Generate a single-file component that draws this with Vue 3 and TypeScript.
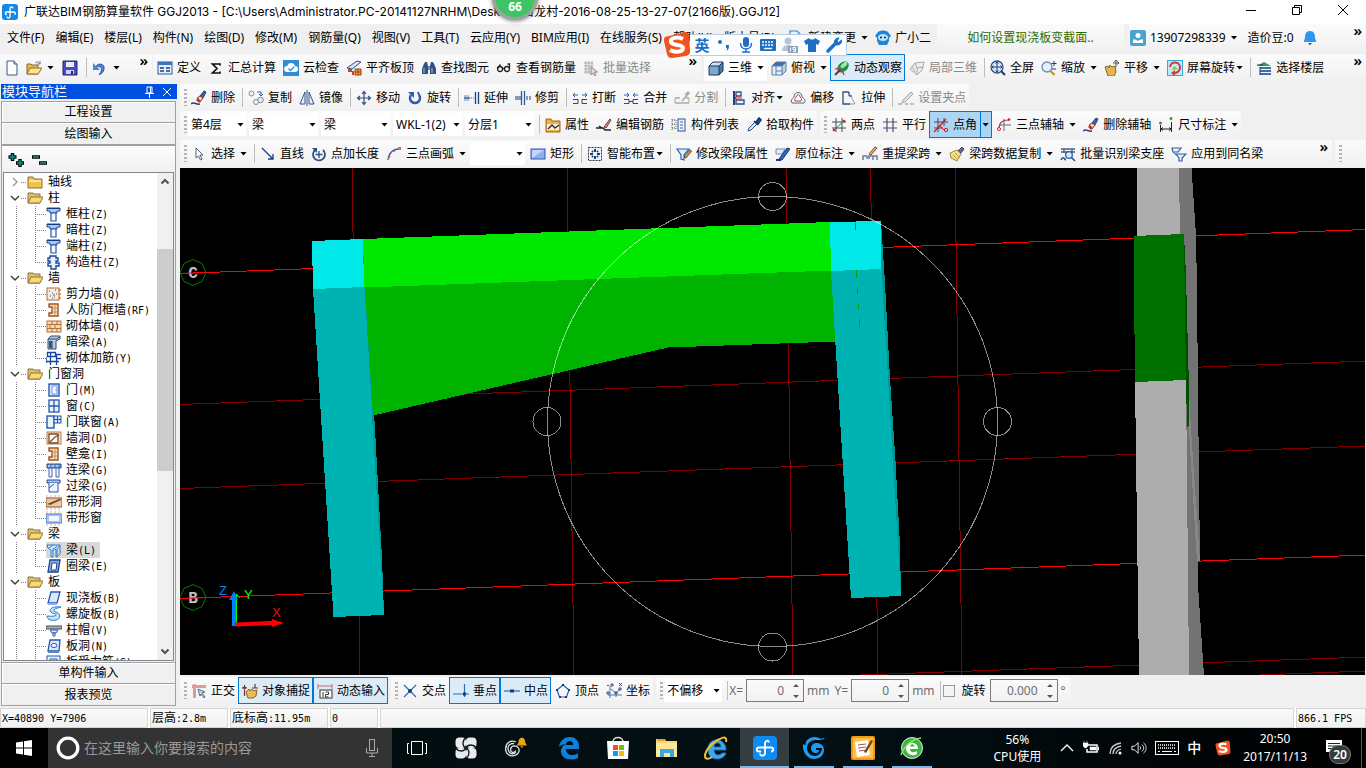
<script setup lang="ts">
import { ref } from 'vue'

interface Tool {
  icon?: string
  label?: string
  arrow?: '' | 'wide' | 'tight' | 'split'
  on?: boolean
  off?: boolean
  white?: boolean
  sep?: boolean
}
interface Leaf { icon: string; name: string; key: string }
interface Branch { name: string; open: boolean; items: Leaf[] }

const S = { sep: true } as Tool
const t = (icon: string, label: string, extra: Partial<Tool> = {}): Tool => ({ icon, label, ...extra })

const menus = ['文件(F)', '编辑(E)', '楼层(L)', '构件(N)', '绘图(D)', '修改(M)', '钢筋量(Q)', '视图(V)', '工具(T)', '云应用(Y)', 'BIM应用(I)', '在线服务(S)', '帮助(H)', '版本号(B)']

const mainTools: Tool[] = [
  t('define', '定义'), t('sigma', '汇总计算'), t('cloud', '云检查'), t('level', '平齐板顶'),
  t('find', '查找图元'), t('glasses', '查看钢筋量'), t('batch', '批量选择', { off: true }),
]
const viewTools: Tool[] = [
  t('cube', '三维', { arrow: 'wide', white: true }), t('cubetop', '俯视', { arrow: 'wide' }),
  t('orbit', '动态观察', { on: true }), t('partcube', '局部三维', { off: true }), S,
  t('full', '全屏'), t('zoom', '缩放', { arrow: 'wide' }), t('hand', '平移', { arrow: 'wide' }),
  t('screenrot', '屏幕旋转', { arrow: 'tight' }), S, t('floors', '选择楼层'),
]
const editTools: Tool[] = [
  t('erase', '删除'), S, t('copy', '复制'), t('mirror', '镜像'), S, t('move', '移动'), t('rotate', '旋转'), S,
  t('extend', '延伸'), t('trim', '修剪'), S, t('break', '打断'), t('merge', '合并'), t('split', '分割', { off: true }), S,
  t('align', '对齐', { arrow: 'tight' }), t('offset', '偏移'), t('stretch', '拉伸'), S, t('grippt', '设置夹点', { off: true }),
]
const compTools: Tool[] = [S, t('props', '属性'), t('editbar', '编辑钢筋'), t('list', '构件列表'), t('pick', '拾取构件')]
const axisTools: Tool[] = [
  t('twopt', '两点'), t('parallel', '平行'), t('ptangle', '点角', { on: true, arrow: 'split' }),
  t('threeaxis', '三点辅轴', { arrow: 'wide' }), t('erase', '删除辅轴'), t('dim', '尺寸标注', { arrow: 'wide' }),
]
const drawTools: Tool[] = [
  t('cursor', '选择', { arrow: 'wide' }), S, t('line', '直线'), t('ptlen', '点加长度'), t('arc', '三点画弧', { arrow: 'wide' }),
]
const beamTools: Tool[] = [
  t('rect', '矩形'), S, t('smart', '智能布置', { arrow: 'tight' }), S, t('beamedit', '修改梁段属性'),
  t('insitu', '原位标注', { arrow: 'wide' }), t('respan', '重提梁跨', { arrow: 'wide' }),
  t('brush', '梁跨数据复制', { arrow: 'wide' }), t('support', '批量识别梁支座'), t('apply', '应用到同名梁'),
]
const modeTools: Tool[] = [t('ortho', '正交'), t('snap', '对象捕捉', { on: true }), t('dyn', '动态输入', { on: true })]
const snapTools: Tool[] = [
  t('cross', '交点'), t('perp', '垂点', { on: true }), t('mid', '中点', { on: true }), t('vertex', '顶点'), t('coord', '坐标'),
]
const combos = [
  { id: 'floor', label: '楼层', value: '第4层', small: true },
  { id: 'kind', label: '构件类型', value: '梁', small: false },
  { id: 'sort', label: '构件种类', value: '梁', small: false },
  { id: 'member', label: '构件', value: 'WKL-1(2)', small: false },
  { id: 'layer', label: '分层', value: '分层1', small: false },
]

const tree = ref<Branch[]>([
  { name: '轴线', open: false, items: [] },
  { name: '柱', open: true, items: [
    { icon: 'col', name: '框柱', key: '(Z)' }, { icon: 'col', name: '暗柱', key: '(Z)' },
    { icon: 'col', name: '端柱', key: '(Z)' }, { icon: 'gzz', name: '构造柱', key: '(Z)' } ] },
  { name: '墙', open: true, items: [
    { icon: 'shear', name: '剪力墙', key: '(Q)' }, { icon: 'niche', name: '人防门框墙', key: '(RF)' },
    { icon: 'brick', name: '砌体墙', key: '(Q)' }, { icon: 'hidbeam', name: '暗梁', key: '(A)' },
    { icon: 'bar', name: '砌体加筋', key: '(Y)' } ] },
  { name: '门窗洞', open: true, items: [
    { icon: 'door', name: '门', key: '(M)' }, { icon: 'win', name: '窗', key: '(C)' },
    { icon: 'doorwin', name: '门联窗', key: '(A)' }, { icon: 'hole', name: '墙洞', key: '(D)' },
    { icon: 'niche', name: '壁龛', key: '(I)' }, { icon: 'lian', name: '连梁', key: '(G)' },
    { icon: 'guo', name: '过梁', key: '(G)' }, { icon: 'striph', name: '带形洞', key: '' },
    { icon: 'stripw', name: '带形窗', key: '' } ] },
  { name: '梁', open: true, items: [
    { icon: 'beam', name: '梁', key: '(L)' }, { icon: 'ring', name: '圈梁', key: '(E)' } ] },
  { name: '板', open: true, items: [
    { icon: 'slab', name: '现浇板', key: '(B)' }, { icon: 'spiral', name: '螺旋板', key: '(B)' },
    { icon: 'cap', name: '柱帽', key: '(V)' }, { icon: 'slabhole', name: '板洞', key: '(N)' },
    { icon: 'slabbar', name: '板受力筋', key: '(S)' } ] },
])
const selected = ref('梁(L)')

const status = [
  [['', 'X=40890 Y=7906']],
  [['层高', ':2.8m']],
  [['底标高', ':11.95m']],
  [['', '0']],
]

const G = '#8a8a8a'
const N = '#1f3f77'
const icons: Record<string, string> = {
  define: `<rect x="1" y="2" width="14" height="12" fill="#e8f0fb" stroke="#2a5aa0"/><rect x="1" y="2" width="14" height="3" fill="#3c74c4"/><path d="M3 8h4M3 11h4M9 8h4M9 11h4" stroke="${N}" stroke-width="1.5"/>`,
  sigma: `<path d="M12 5.500V4H4.500L9 8.500 4.500 13H12v-1.500" fill="none" stroke="#111" stroke-width="1.700"/>`,
  cloud: `<rect width="16" height="16" fill="#2a8fd8"/><path d="M4 12a3 3 0 0 1 .3-6A4 4 0 0 1 12 6a3 3 0 0 1 0 6z" fill="#fff"/><path d="M5.500 8.500l2 2 4-4" fill="none" stroke="#2a8fd8" stroke-width="1.300"/>`,
  level: `<path d="M1 8L11 1l4 1-9 7z" fill="#dce6f5" stroke="#2b4b85"/><path d="M2 9h4v2h2v4H6v-3H2z" fill="#d2451e"/><path d="M9 9h6v6H9z" fill="#f0b040" stroke="#8c3a12"/><path d="M9 12h6M12 9v6" stroke="#8c3a12"/>`,
  find: `<path d="M2 6l2-4h2l1 4v8H1V9zM14 6l-2-4h-2L9 6v8h6V9z" fill="#34507f"/><path d="M7 6h2v4H7z" fill="#6f8fc4"/><path d="M3 8v5M11 8v5" stroke="#a9c1ea"/>`,
  glasses: `<g fill="none" stroke="#222" stroke-width="1.3"><circle cx="4" cy="9" r="2.500"/><circle cx="11" cy="9" r="2.500"/><path d="M6.500 8.500h2M13.500 8.500V4h-2M1.500 8.500l3-4"/></g>`,
  batch: `<path d="M1 3h9M1 6h9M1 9h6M1 12h6M3 1v13M6 1v13M9 1v7" stroke="#aaa"/><path d="M8 7v8l2-2 1.500 3 1.500-1-1.500-3h3z" fill="#ddd" stroke="${G}"/>`,
  cube: `<path d="M1 6l4-4h10l-4 4z" fill="#cfe0f2"/><path d="M1 6h10v9H1z" fill="#7fa6cc"/><path d="M11 6l4-4v9l-4 4z" fill="#4c78a6"/><path d="M1 6l4-4h10v9l-4 4H1zM1 6h10v9M11 6l4-4" fill="none" stroke="#18365c"/>`,
  cubetop: `<path d="M1 6l4-4h10l-4 4z" fill="#3b6fae"/><path d="M1 6h10v9H1z" fill="#e5eef8"/><path d="M11 6l4-4v9l-4 4z" fill="#b9cfe6"/><path d="M1 6l4-4h10v9l-4 4H1zM1 6h10v9M11 6l4-4M5 6v9M5 11h6" fill="none" stroke="#5d7ea6"/>`,
  orbit: `<ellipse cx="9" cy="7" rx="6.500" ry="4.500" fill="#1f8f4a" transform="rotate(-40 9 7)"/><ellipse cx="10" cy="5" rx="4" ry="2" fill="#9fe8a8" transform="rotate(-40 10 5)"/><path d="M1 9c3-1 8 1 9 6" fill="none" stroke="#c33" stroke-width="1.200"/><path d="M1 15l5-5" stroke="#444" stroke-width="2"/>`,
  partcube: `<path d="M1 9l5-6 9-1-2 8-5 5z" fill="#eee" stroke="#aaa"/><path d="M6 3l2 5 7-1M3 6l3 6M8 8v7" fill="none" stroke="#aaa"/>`,
  full: `<circle cx="7" cy="7" r="6" fill="#dfeafb" stroke="#2c4f8e" stroke-width="1.300"/><path d="M7 2v10M2 7h10M5.500 3.500L7 2l1.500 1.500M5.500 10.500L7 12l1.500-1.500M3.500 5.500L2 7l1.500 1.500M10.500 5.500L12 7l-1.500 1.500" fill="none" stroke="${N}"/><path d="M11 11l4 4" stroke="#2c3f6e" stroke-width="2.200"/>`,
  zoom: `<circle cx="6" cy="7" r="5" fill="#e6effb" stroke="#7089ae" stroke-width="1.300"/><path d="M9.500 11l4 4" stroke="#c9962f" stroke-width="2.400"/><path d="M13 1v5M10.500 3.500h5M11 9h4" stroke="${N}"/>`,
  hand: `<path d="M1 7l3-1 1 2 1-3 2 2 3-1 1 6-2 4H4z" fill="#e3b554" stroke="#8a6420"/><path d="M12 0v7M9 3h6M10.500 1.500L12 0l1.500 1.500M13.500 1.500L15 3l-1.500 1.500" fill="none" stroke="#555"/>`,
  screenrot: `<rect x=".5" y=".5" width="15" height="15" fill="#bfe9fa" stroke="#3fa5d8"/><path d="M3 7a5 5 0 0 1 10 1c0 3-3 5-6 5" fill="none" stroke="#d43a2c" stroke-width="2"/><path d="M8 10L4 13l4 3z" fill="#d43a2c"/><path d="M5 10l2-4 4 3z" fill="#8cc63f"/>`,
  floors: `<path d="M1 6l7-4 7 4z" fill="#2f9a5d"/><path d="M4 7h11v2H4zM4 10h11v2H4zM4 13h11v2H4z" fill="#3f6fa8"/><path d="M4 7v8M1 5h6" stroke="#143a63"/>`,
  erase: `<path d="M9 6l4-5 2 1-3 6z" fill="#3b62b0" stroke="#23407c"/><path d="M6 8l3-2 3 2-3 4z" fill="#f3d3c3" stroke="#8c3a2a"/><path d="M5 10l2-2 3 3-2 2z" fill="#b73a30"/><path d="M0 14c3-3 5 1 9 0" fill="none" stroke="#27437d" stroke-width="1.500"/>`,
  copy: `<circle cx="3.500" cy="3.500" r="2.500" fill="#f4f6fa" stroke="#7f8ba1"/><circle cx="8" cy="12" r="2.500" fill="#f4f6fa" stroke="#7f8ba1"/><circle cx="12.500" cy="10" r="2.800" fill="#e4e9f3" stroke="#7f8ba1"/><path d="M9 2h4v4M11 4l2 2 2-2" fill="none" stroke="#3b5f9d"/>`,
  mirror: `<path d="M6 2v12H1zM10 2v12h5z" fill="#e7eef8" stroke="#31548d"/><path d="M8 0v16" stroke="#31548d"/>`,
  move: `<path d="M8 2v12M2 8h12M6 4l2-2.500L10 4M6 12l2 2.500 2-2.500M4 6L1.500 8 4 10M12 6l2.500 2-2.500 2" fill="none" stroke="#2e4c7e" stroke-width="1.200"/>`,
  rotate: `<path d="M4 5a5 5 0 1 0 8 0" fill="none" stroke="#2f5cb0" stroke-width="2.600"/><path d="M1 2h6v6z" fill="#2f5cb0"/><path d="M12 5l-1-3" stroke="#2f5cb0" stroke-width="2"/>`,
  extend: `<path d="M0 8h6" stroke="${N}" stroke-width="1.300"/><path d="M0 6h5M0 10h5" stroke="#6b8fc9"/><path d="M7 8h4" stroke="#c33" stroke-dasharray="1 1"/><path d="M11.500 2v12M14.500 2v12" stroke="${N}" stroke-width="1.300"/>`,
  trim: `<path d="M0 7h6M0 9h6" stroke="${N}"/><path d="M6.500 1v14M9.500 1v14" stroke="#2f5b9d" stroke-width="1.300"/><path d="M11 7h5M11 9h5" stroke="${N}" stroke-dasharray="2 1"/>`,
  break: `<path d="M1 5h5M10 5h5M3 3L1 5l2 2M13 3l2 2-2 2" fill="none" stroke="#2f5fc0"/><path d="M1 9.500h5v4H1M15 9.500h-5v4h5" fill="none" stroke="#314868"/>`,
  merge: `<path d="M1 5h5M10 5h5M4 3l2 2-2 2M12 3l-2 2 2 2" fill="none" stroke="#2f5fc0"/><path d="M1 9.500h5v4H1M15 9.500h-5v4h5M6 11.500h4" fill="none" stroke="#314868"/>`,
  split: `<path d="M1 13h14M1 8h5M12 8h3M11 5l3-3 1 1-7 8" fill="none" stroke="#aaa" stroke-width="1.500"/><path d="M1 13V8M15 8v5" stroke="#aaa"/>`,
  align: `<path d="M3 1v14" stroke="${N}" stroke-width="2"/><path d="M5 2h5v4H5zM5 10h8v4H5z" fill="#eef3fb" stroke="#2f4f8c" stroke-width="1.300"/><path d="M4 8h7M6 6L4 8l2 2" fill="none" stroke="#c22"/>`,
  offset: `<path d="M2 13c-2-3 1-5 2-6 0-6 8-6 8 0 3 2 4 4 2 6z" fill="#f4f7fb" stroke="#4b668f"/><path d="M5 11c-1-2 1-3 1-4 1-3 4-3 4 0 1 1 2 2 1 4z" fill="#fff" stroke="#c43b2d"/>`,
  stretch: `<path d="M8 2H2v12h7" fill="none" stroke="#2f4f8c" stroke-width="1.300"/><path d="M8 3l6 11H8" fill="none" stroke="#2f4f8c" stroke-dasharray="1 1"/><path d="M8 2v4h3" fill="none" stroke="${N}"/>`,
  grippt: `<path d="M5 10l8-8 2 2-8 8-3 1z" fill="#ddd" stroke="#aaa"/><path d="M0 14h4M7 14h3M12 14h4" stroke="#aaa" stroke-width="1.500"/>`,
  props: `<path d="M1 2h5l1 2h8v11H1z" fill="#f3ae3d" stroke="#a1661b"/><path d="M2 7h12v6H2z" fill="#fdf3d8"/><path d="M3 12l4-4 3 3 4-3" fill="none" stroke="#333" stroke-width="1.500"/>`,
  editbar: `<path d="M0 11h7l2 2h6M3 9l3 2" fill="none" stroke="#222" stroke-width="1.400"/><path d="M8 10l6-8 1 1-5 8z" fill="#d99a8c" stroke="#6a3a2a"/>`,
  list: `<path d="M1 3h3M1 7h3M1 11h3" stroke="#333" stroke-dasharray="1 1"/><path d="M1 2v12M5 3v10" stroke="#666" stroke-dasharray="1 1"/><rect x="7" y="2" width="7" height="12" fill="#eef3fb" stroke="#30528f"/><path d="M9 5h3M9 8h3M9 11h3" stroke="#3669b0"/>`,
  pick: `<path d="M2 14l1-3 6-6 2 2-6 6z" fill="#cfe7f6" stroke="#2f4f8c"/><path d="M8 4l4 4M10 5l3-4 2 2-3 4z" fill="#2b4f9a" stroke="#1b3570" stroke-width="1.600"/>`,
  twopt: `<path d="M1 5h14M1 11h14M5 1v14M11 1v14" stroke="#444a66"/><path d="M2 14L14 3" stroke="#2c8a3c"/><circle cx="3" cy="13" r="1.300" fill="#c22"/><circle cx="13" cy="4" r="1.300" fill="#c22"/>`,
  parallel: `<path d="M1 5h14M1 11h14M5 1v14M11 1v14" stroke="#4a5070" stroke-width="1.200"/>`,
  ptangle: `<path d="M1 5h14M1 11h9M5 1v14M11 1v8" stroke="#444a66"/><path d="M1 15L13 2" stroke="#d01818" stroke-width="1.200"/><path d="M7 9l5 5" stroke="#d01818"/><circle cx="13" cy="13" r="1.700" fill="none" stroke="#d01818"/>`,
  threeaxis: `<path d="M3 12C3 6 6 3 13 3" fill="none" stroke="#c83a3a" stroke-width="1.200"/><path d="M8 2v12M3 8h12" stroke="#5b6488"/><circle cx="3" cy="12" r="1.500" fill="#fff" stroke="#c22"/><circle cx="13" cy="2.500" r="1.300" fill="#c22"/>`,
  dim: `<path d="M2.500 8v7M13.500 5v10M3 12h10M5 10.500L3 12l2 1.500M11 10.500l2 1.500-2 1.500" fill="none" stroke="#222"/><circle cx="2.500" cy="6" r="1.500" fill="#3c9a3c"/><circle cx="13" cy="1.500" r="1.500" fill="#3c9a3c"/>`,
  cursor: `<path d="M5 2v10l2.500-2 2 4 1.500-1-2-4h3z" fill="#fff" stroke="#555f78"/>`,
  line: `<path d="M2 2l11 11M13 8v5H8" fill="none" stroke="#1b3a80" stroke-width="1.300"/>`,
  ptlen: `<path d="M4 4a6 6 0 1 0 8 0" fill="none" stroke="#2f4d80" stroke-width="1.800"/><path d="M1 2h5v5z" fill="#2f4d80"/><path d="M8 5v7M4.500 8.500h7" stroke="#2f4d80" stroke-width="1.300"/>`,
  arc: `<path d="M2 14C3 7 7 3 13 3" fill="none" stroke="#3c5fa0" stroke-width="1.400"/><path d="M2 14l1-4 2 0zM6 6l2-2 1 2zM12 1h3v3h-3z" fill="#e06a50"/>`,
  rect: `<rect x="1" y="3" width="14" height="10" fill="#8fb0ee" stroke="#2d55b5"/><path d="M2 4h12L2 12z" fill="#c3d6fa"/>`,
  smart: `<rect x="1.500" y="1.500" width="13" height="13" fill="#eef3fb" stroke="#333" stroke-dasharray="2 1"/><path d="M8 3v3M8 10v3M3 8h3M10 8h3M5 5l1 1M11 5l-1 1M5 11l1-1M11 11l-1-1" stroke="${N}" stroke-width="2"/>`,
  beamedit: `<path d="M1 3h12L8 9v5l-3-1V9z" fill="#dff0fb" stroke="#1f62b0" stroke-width="1.200"/><path d="M8 11l6-7 1.500 1L10 12z" fill="#e9a23c" stroke="#7c3f1a"/>`,
  insitu: `<path d="M1 3h9l-3 5H1z" fill="#dfeafb" stroke="#6d8fc4"/><path d="M4 13l8-11 3 1-8 11z" fill="#3367b4" stroke="#1c3c78"/><path d="M1 14h5" stroke="#1c3c78" stroke-width="2"/>`,
  respan: `<path d="M1 14v-4h4v3M7 13v-3h4v4M15 14v-4h-4" fill="none" stroke="#6a7d9c" stroke-width="1.500"/><path d="M7 8l6-7 2 1-6 7z" fill="#edb267" stroke="#7c4d2a"/>`,
  brush: `<path d="M9 5l4-4 2 2-3 4z" fill="#5a6f94" stroke="#33435f"/><path d="M1 7l7-3 4 4-4 7-6-3z" fill="#f0df8d" stroke="#a58a35"/><path d="M4 9l4 4M6 7l4 4" stroke="#b99d43"/>`,
  support: `<path d="M1 3h14M4 3v4M12 3v4M1 6h14" stroke="#4b5f86" stroke-width="1.400"/><circle cx="9" cy="9" r="3.300" fill="#d6ecfb" stroke="#2f5f9f" stroke-width="1.300"/><path d="M11.500 11.500L15 15M1 14c2-5 4 0 5 0" fill="none" stroke="#2f4f8c" stroke-width="1.600"/>`,
  apply: `<path d="M1 2h9L7 6H2zM5 8h10l-4 4v3H8v-3z" fill="#e9f2fc" stroke="#335f9f" stroke-width="1.200"/><path d="M2 6l3 3" stroke="#c33"/>`,
  ortho: `<path d="M1 3.500h14M3.500 1v14" stroke="#dc9c9c" stroke-width="3"/><path d="M7 6l7 3-3 1 3 4-1 1-3-4-1 2z" fill="#c8d4e2" stroke="#5f7288"/>`,
  snap: `<path d="M0 5h5M10 5h6M2.500 2v11M13 1v4M1 4l1.500 2L4 4" fill="none" stroke="#7c2f2f" stroke-width="1.200"/><path d="M4 9l3-3 1 2 2-2 2 2 3-1-1 6-3 2H6z" fill="#e9bd5a" stroke="#8a6420"/>`,
  dyn: `<path d="M1 3h14M1 1v5M15 1v5" stroke="#c07070"/><rect x="3" y="7" width="12" height="8" fill="#fff" stroke="#333"/><path d="M6 9v5M8.500 9h3v2.500h-3V14h3" fill="none" stroke="#333"/>`,
  cross: `<path d="M2 2l12 12M14 2L2 14" stroke="#2a6cb8" stroke-width="1.200"/><circle cx="8" cy="8" r="2" fill="#1b3a78"/>`,
  perp: `<path d="M0 11h16M11.500 1v13" stroke="#2a6cb8" stroke-width="1.200"/><path d="M10 9.500h3v3h-3z" fill="#1b3a78"/>`,
  mid: `<path d="M0 8h16" stroke="#2a6cb8" stroke-width="1.200"/><path d="M6 6.500h4v3H6z" fill="#1b3a78"/>`,
  vertex: `<path d="M8 2l6 5-2.500 7h-7L2 7z" fill="none" stroke="#2a5fae" stroke-width="1.200"/><path d="M7 1h2v2H7zM13 6h2v2h-2zM1 6h2v2H1zM4 13h2v2H4zM10 13h2v2h-2z" fill="#1b3a78"/>`,
  coord: `<path d="M4 3v12M2 12h14M5 6l5 4 4-4M10 10v4" fill="none" stroke="#4a78b8"/><path d="M1 2l1 1 1-1M13 0l3 3M16 0l-3 3M5 1h2v2H5zM1 9h2v2H1zM9 9h2v2H9zM13 5h2v2h-2z" fill="none" stroke="#3b4f70"/>`,
  newf: `<path d="M3 1h7l3 3v11H3z" fill="#fff" stroke="#36588f"/><path d="M10 1v3h3" fill="#cfdcf0" stroke="#36588f"/>`,
  open: `<path d="M1 4h4l1 1h6v9H1z" fill="#e2b84f" stroke="#8f6a1c"/><path d="M4 8h12l-4 6H1z" fill="#fbe49a" stroke="#8f6a1c"/><path d="M9 3c2-2 4-1 5 1M14 1v3h-3" fill="none" stroke="#5c7fb5"/>`,
  save: `<path d="M1 1h14v14H1z" fill="#4a4cc0" stroke="#22246e"/><path d="M4 2h8v5H4z" fill="#e9edf8"/><path d="M4 10h8v4H4z" fill="#cfd4ee"/><path d="M9 11h2v3H9z" fill="#22246e"/>`,
  undo: `<path d="M3 7c4-5 10-3 9 2 0 3-3 5-5 6 2-3 4-7 1-8-2-1-3 0-4 1" fill="#4f82d8" stroke="#2d5cab"/><path d="M1 3v7h7z" fill="#4f82d8"/>`,
  newchg: `<path d="M2 1h7l4 4v10H2z" fill="#e7f2fc" stroke="#3a86c8" stroke-width="1.200"/><path d="M6 10h8M11 7l3 3-3 3" fill="none" stroke="#2378c2" stroke-width="1.600"/>`,
  robot: `<path d="M0 6l3-4c3-2 7-2 10 0l3 4-2 2v3l-2 4H4l-2-4V8z" fill="#1f86dc"/><ellipse cx="8" cy="7.500" rx="5" ry="3.500" fill="#bfe6fb"/><circle cx="6" cy="7.500" r="1" fill="#123"/><circle cx="10" cy="7.500" r="1" fill="#123"/>`,
  user: `<rect width="16" height="16" rx="2" fill="#4ba3cf"/><circle cx="8" cy="5.500" r="2.500" fill="#fff"/><path d="M3 13V9.500h2.500L8 11l2.500-1.500H13V13z" fill="#fff"/>`,
  bell: `<path d="M8 1c-4 0-5 3-5 7l-1 3v1h12v-1l-1-3c0-4-1-7-5-7z" fill="#2f95f3"/><path d="M6 13h4l-2 2.500z" fill="#1565b8"/>`,
  folder: `<path d="M1 3h5l1 2h8v9H1z" fill="#f0c453" stroke="#8f6f2a"/><path d="M2 6h12v2H2z" fill="#fbe39b"/>`,
  folderopen: `<path d="M1 3h5l1 1h6v9H1z" fill="#d8c07a" stroke="#8f7433"/><path d="M4 7h12l-3 6H1z" fill="#f8d777" stroke="#8f7433"/>`,
  col: `<path d="M1 2h13v3h-3v2H4V5H1z" fill="#a9c5f2" stroke="#1f4d94"/><path d="M5 7h5v8H5z" fill="#f4f8ff" stroke="#2754b0" stroke-width="1.200"/><path d="M1 2.500h13" stroke="#17387a"/>`,
  gzz: `<path d="M4 2h6v2h2v3h-2v2h3v3h-3v3H5v-3H2V9h2V7H2V4h2z" fill="#eaf1fd" stroke="#1e4a94" stroke-width="1.400"/>`,
  shear: `<rect x="1" y="2" width="12" height="12" fill="#f4ece4" stroke="#b06a3a"/><path d="M3 5h1M6 7h1M9 4h1M4 10h1M8 11h1M10 8h1M6 12h1M7 9h2" stroke="#555"/><path d="M13 4h2M13 8h2M13 12h2" stroke="#e2711d" stroke-width="1.500"/>`,
  niche: `<path d="M3 2h9v12H3v-3h3V5H3z" fill="#f7e3ca" stroke="#9a5320" stroke-width="1.400"/><path d="M6 6h6M6 10h6M9 2v12" stroke="#c98a52"/>`,
  brick: `<rect x="1" y="3" width="14" height="11" fill="#f7d9b8" stroke="#b5713a"/><path d="M1 6.500h14M1 10.500h14M6 3v3.500M11 3v3.500M4 6.500v4M9 6.500v4M6 10.500V14M11 10.500V14" stroke="#b5713a"/>`,
  hidbeam: `<path d="M2 5l3-3h9v3l-4 2v8H2z" fill="#b9c8da" stroke="#2f4a70"/><path d="M2 5h9l3-3M6 7v8" fill="none" stroke="#2f4a70"/><path d="M3 7h3v7H3z" fill="#34537d"/>`,
  bar: `<path d="M1.500 2.500h8v4h-8zM4.500 2v13M10.500 5v10M0 11.500h13M10 4.500h5M10 8.500h5M0 7v6" fill="none" stroke="#1c45a0" stroke-width="1.300"/>`,
  door: `<rect x="3" y="2" width="10" height="12" fill="#dbe8fb" stroke="#2458b0" stroke-width="1.400"/><path d="M6 4h5v8H6z" fill="#f6faff" stroke="#6b98de"/><path d="M9.500 8h1" stroke="#1b3a78"/>`,
  win: `<rect x="3" y="2" width="10" height="12" fill="#eaf2fd" stroke="#2458b0" stroke-width="1.300"/><path d="M3 8h10M8 2v12" stroke="#2458b0" stroke-width="1.300"/>`,
  doorwin: `<rect x="1" y="2" width="7" height="12" fill="#eaf2fd" stroke="#2458b0" stroke-width="1.400"/><rect x="8" y="2" width="7" height="7" fill="#d3e2f8" stroke="#2458b0"/><path d="M11.500 2v7M8 5.500h7" stroke="#2458b0"/>`,
  hole: `<rect x="1" y="2" width="14" height="12" fill="#f7e0c8" stroke="#c07a48"/><path d="M3 4h9v9H3z" fill="#fff" stroke="#7a4a25" stroke-width="1.300"/><path d="M4 12l5-5 4-2" fill="none" stroke="#7a4a25" stroke-width="1.300"/>`,
  lian: `<path d="M1 2h14v4H1z" fill="#6e93cf" stroke="#1f4d94"/><path d="M3 6h3v9H3zM10 6h3v9h-3z" fill="#f4f8ff" stroke="#3a64ad"/><path d="M2 4h12" stroke="#fff" stroke-dasharray="2 2"/>`,
  guo: `<path d="M1 2h13v3H1z" fill="#a9c5f2" stroke="#1f4d94"/><path d="M3 5v9h9V5" fill="#eef4fe" stroke="#2754b0"/><path d="M3 10l5-4" stroke="#2754b0"/>`,
  striph: `<rect x="0" y="4" width="16" height="9" fill="#e9c9a8" stroke="#8f5125"/><path d="M1 10l12-5h2v1L4 11z" fill="#7a4a25"/><path d="M1 1v2M5 1v2M9 1v2M13 1v2M1 14v2M5 14v2M9 14v2M13 14v2" stroke="#f0a8a0"/>`,
  stripw: `<rect x="0" y="4" width="16" height="9" fill="#a8c4f0" stroke="#4a78c0"/><rect x="3" y="6" width="10" height="5" fill="#f2f7ff"/><path d="M1 1v2M5 1v2M9 1v2M13 1v2M1 14v2M5 14v2M9 14v2M13 14v2" stroke="#f0a8a0"/>`,
  beam: `<path d="M1 3h13l-3 4v8h-1V8L8 6l-1 2v7H5V8L2 6z" fill="#cfe6fb" stroke="#2c7cc8"/><path d="M14 3v9l-3 3M3 6l4-3M6 9l5-5" fill="none" stroke="#2c7cc8"/>`,
  ring: `<path d="M4 2h10l-2 12H2z" fill="#8fb2ea" stroke="#1d3f86" stroke-width="1.300"/><path d="M6 5h5l-1 7H5z" fill="#fff" stroke="#1d3f86"/>`,
  slab: `<path d="M5 2h9l-3 11H2z" fill="#dce9fc" stroke="#2458b0" stroke-width="1.300"/><path d="M2 13h9v2H2z" fill="#8db0ea"/>`,
  spiral: `<path d="M15 1C7 0 2 3 5 6s6 1 5 3-7 1-9 1c0 4 5 5 9 4s5-5 2-7-5-1-4-3 5-2 7-3z" fill="#bfe4f8" stroke="#2f7ec0"/>`,
  cap: `<path d="M0 4h16v3H0z" fill="#a9adb4" stroke="#4d5156"/><path d="M4 8h8l-2 3H6z" fill="#dbe8fb" stroke="#2754b0"/><path d="M7 11h2v3H7z" fill="#fff" stroke="#2754b0"/>`,
  slabhole: `<path d="M4 2h10l-1 11H2z" fill="#dce9fc" stroke="#2458b0" stroke-width="1.300"/><ellipse cx="8" cy="7.500" rx="3" ry="2" fill="#fff" stroke="#2458b0"/><path d="M2 13h11v2H2z" fill="#5d86cc"/>`,
  slabbar: `<rect x="1" y="2" width="13" height="12" fill="#eaf2fd" stroke="#2754b0"/><path d="M4 5h7v5H4z" fill="none" stroke="#2754b0"/>`,
}
const swatch = (n?: string) => (n ? icons[n] ?? '' : '')

const bigCircle = { x: 772.5, y: 421.5, r: 225 }
const handles = [[772.5, 196.5], [547, 421.5], [997.5, 421.5], [772.5, 647]]
const dimGrid = [
  [180, 404.5, 1366, 361], [180, 488.5, 1366, 446], [860, 675, 1366, 657], [1260, 675, 1366, 671],
  [352, 168, 360, 675], [567, 168, 574, 675], [786, 168, 793, 675], [870.5, 168, 878, 675], [955, 168, 962, 675],
]
const dashes = [[855.5, 223, 230], [856.5, 270, 278], [857.5, 287, 294], [858.5, 303, 310], [859.5, 319, 327]]
</script>

<template>
  <div class="app">
    <header class="title">
      <svg class="i16" viewBox="0 0 16 16"><rect width="16" height="16" rx="3" fill="#1089e8" /><path d="M8 12.500a1.500 1.500 0 0 1-3 0M8 13V4.500a1.500 1.500 0 0 1 3 0M5 10.500H4a1.500 1.500 0 0 1 0-2.500h8.500a1.300 1.300 0 0 1 0 2.500" fill="none" stroke="#fff" stroke-width="1.300" /></svg>
      <h1>广联达BIM钢筋算量软件 GGJ2013 - [C:\Users\Administrator.PC-20141127NRHM\Desktop\白龙村-2016-08-25-13-27-07(2166版).GGJ12]</h1>
      <div class="winbtns">
        <button aria-label="最小化"><svg viewBox="0 0 12 12"><path d="M1 6.500h10" stroke="#000" /></svg></button>
        <button aria-label="还原"><svg viewBox="0 0 12 12"><path d="M1.500 3.500h7v7h-7zM3.500 3.500v-2h7v7h-2" fill="none" stroke="#000" /></svg></button>
        <button aria-label="关闭"><svg viewBox="0 0 12 12"><path d="M1 1l10 10M11 1L1 11" stroke="#000" /></svg></button>
      </div>
      <div class="ball">66</div>
    </header>

    <div class="row">
      <nav class="menus">
        <button v-for="m in menus" :key="m">{{ m }}</button>
        <button class="tool menutool"><svg class="i16" viewBox="0 0 16 16" v-html="icons.newchg"></svg><span>新建变更</span><i class="arr wide"></i></button>
        <button class="tool"><svg class="i16" viewBox="0 0 16 16" v-html="icons.robot"></svg><span>广小二</span></button>
      </nav>
      <div class="panel hint"><a href="#">如何设置现浇板变截面..</a></div>
      <div class="panel grow account">
        <button class="tool"><svg class="i16" viewBox="0 0 16 16" v-html="icons.user"></svg><span>13907298339</span><i class="arr wide"></i></button>
        <span>造价豆:0</span>
        <svg class="i16 bellicon" viewBox="0 0 16 16" v-html="icons.bell"></svg>
        <span class="more">»</span>
      </div>
      <div class="ime">
        <svg class="slogo" viewBox="0 0 28 28"><path d="M2 6L22 1c3 0 4 2 4 4l1 15c0 3-1 4-4 5L9 27c-3 0-4-1-5-4L1 10c0-2 0-3 1-4z" fill="#ee5420" /><path d="M20 8C14 5 7 7 8 11s12 2 12 6-8 5-13 2" fill="none" stroke="#fff" stroke-width="4" /></svg>
        <div class="imebar">
          <b>英</b>
          <svg viewBox="0 0 16 16"><circle cx="4" cy="5" r="2" fill="#1e6fc4" /><path d="M10 8h3c0 4-1 5-3 6 1-1 1-2 1-3h-1z" fill="#1e6fc4" /></svg>
          <svg viewBox="0 0 16 16"><rect x="5" y="0" width="6" height="10" rx="3" fill="#1e6fc4" /><path d="M2.500 6c0 8 11 8 11 0M8 12v3M4 15h8" fill="none" stroke="#1e6fc4" stroke-width="1.500" /></svg>
          <svg viewBox="0 0 16 16"><rect x="0" y="2" width="16" height="12" rx="1" fill="#1e6fc4" /><path d="M2 5h12M2 8h12" stroke="#fff" stroke-width="1.500" stroke-dasharray="2 1" /><path d="M4 11.500h8" stroke="#fff" stroke-width="1.500" /></svg>
          <svg viewBox="0 0 16 16"><circle cx="6" cy="4" r="3.500" fill="#b9c3d3" /><path d="M0 14c0-8 12-8 12 0z" fill="#b9c3d3" /><rect x="6" y="9" width="10" height="7" fill="#8fa0ba" /><path d="M8.500 10.500v4M11 10.500h2.500v4H11M11 12.500h2.500M11 10.500v2" fill="none" stroke="#fff" /></svg>
          <svg viewBox="0 0 16 16"><path d="M5 1c1 2 5 2 6 0l5 3-2 4-2-1v8H4V7L2 8 0 4z" fill="#1e6fc4" /></svg>
          <svg viewBox="0 0 16 16"><path d="M2 14l8-8" stroke="#1e6fc4" stroke-width="3.500" stroke-linecap="round" /><path d="M9 7a4 4 0 0 1 4-6l-2 3 1.500 1.500L15.500 3A4 4 0 0 1 9 7z" fill="#1e6fc4" stroke="#1e6fc4" /></svg>
        </div>
      </div>
    </div>

    <div class="row">
      <div class="panel file">
        <button class="tool bare" aria-label="新建"><svg class="i16" viewBox="0 0 16 16" v-html="icons.newf"></svg></button>
        <button class="tool bare" aria-label="打开"><svg class="i16" viewBox="0 0 16 16" v-html="icons.open"></svg><i class="arr wide"></i></button>
        <button class="tool bare" aria-label="保存"><svg class="i16" viewBox="0 0 16 16" v-html="icons.save"></svg></button>
        <i class="sep"></i>
        <button class="tool bare" aria-label="撤销"><svg class="i16" viewBox="0 0 16 16" v-html="icons.undo"></svg><i class="arr wide"></i></button>
        <span class="more">»</span>
      </div>
      <div class="panel main">
        <button v-for="(b, i) in mainTools" :key="i" class="tool" :class="{ off: b.off }"><svg class="i16" viewBox="0 0 16 16" v-html="swatch(b.icon)"></svg><span>{{ b.label }}</span></button>
        <span class="more">»</span>
      </div>
      <div class="panel grow viewp">
        <template v-for="(b, i) in viewTools" :key="i">
          <i v-if="b.sep" class="sep"></i>
          <button v-else class="tool" :class="{ on: b.on, off: b.off, white: b.white }"><svg class="i16" viewBox="0 0 16 16" v-html="swatch(b.icon)"></svg><span>{{ b.label }}</span><i v-if="b.arrow" class="arr" :class="b.arrow"></i></button>
        </template>
        <span class="more">»</span>
      </div>
    </div>

    <div class="body">
      <aside class="side">
        <div class="sidehead"><span>模块导航栏</span>
          <svg class="i12" viewBox="0 0 12 12"><path d="M4 1h5v6H4zM7.500 1v6M2 7.500h9M6.500 8v4" fill="none" stroke="#fff" /></svg>
          <svg class="i12" viewBox="0 0 12 12"><path d="M2 2l8 8M10 2l-8 8" stroke="#fff" /></svg>
        </div>
        <button class="tab">工程设置</button>
        <button class="tab">绘图输入</button>
        <div class="sidebox">
          <div class="expand">
            <svg viewBox="0 0 40 16"><path d="M4.500 1v8M.5 5h8M12 7v8M8 11h8M24 5h8M31 11h8" stroke="#000" stroke-width="3.500" /><path d="M4.500 2v6M1.500 5h6M12 8v6M9 11h6M25 5h6M32 11h6" stroke="#0a9a86" stroke-width="1.500" /></svg>
          </div>
          <div class="treebox">
            <div class="tree">
              <template v-for="(br, bi) in tree" :key="br.name">
                <div class="node" @click="br.open = !br.open">
                  <svg class="tw" viewBox="0 0 12 16"><path :d="br.open ? 'M2 6l4 4 4-4' : 'M4 4l4 4-4 4'" fill="none" :stroke="br.open ? '#404040' : '#a0a0a0'" stroke-width="1.500" /></svg>
                  <i class="stub"></i>
                  <svg class="i16" viewBox="0 0 16 16" v-html="br.open ? icons.folderopen : icons.folder"></svg>
                  <span class="nm">{{ br.name }}</span>
                </div>
                <template v-if="br.open">
                  <div v-for="(lf, li) in br.items" :key="lf.name" class="leaf" @click="selected = lf.name + lf.key">
                    <i class="v1" :class="{ none: bi > 5 }"></i>
                    <i class="v2" :class="{ last: li === br.items.length - 1 }"></i>
                    <span class="lab" :class="{ sel: selected === lf.name + lf.key }">
                      <svg class="i16" viewBox="0 0 16 16" v-html="icons[lf.icon]"></svg>
                      <span class="nm">{{ lf.name }}<span class="mono">{{ lf.key }}</span></span>
                    </span>
                  </div>
                </template>
              </template>
            </div>
            <div class="scroll">
              <svg viewBox="0 0 16 16"><path d="M4.500 10L8 6.500l3.500 3.500" fill="none" stroke="#505050" stroke-width="2" /></svg>
              <i class="track1"></i><i class="thumb"></i><i class="track2"></i>
              <svg viewBox="0 0 16 16"><path d="M4.500 6L8 9.500 11.500 6" fill="none" stroke="#505050" stroke-width="2" /></svg>
            </div>
          </div>
        </div>
        <button class="tab">单构件输入</button>
        <button class="tab">报表预览</button>
      </aside>

      <main class="work">
        <div class="trow">
          <div class="panel"><i class="grip"></i>
            <template v-for="(b, i) in editTools" :key="i">
              <i v-if="b.sep" class="sep"></i>
              <button v-else class="tool" :class="{ off: b.off }"><svg class="i16" viewBox="0 0 16 16" v-html="swatch(b.icon)"></svg><span>{{ b.label }}</span><i v-if="b.arrow" class="arr" :class="b.arrow"></i></button>
            </template>
          </div>
        </div>
        <div class="trow tight">
          <div class="panel"><i class="grip"></i>
            <div class="combos">
              <label v-for="c in combos" :key="c.id" class="combo" :class="{ small: c.small }">
                <select :aria-label="c.label"><option>{{ c.value }}</option></select><i class="arr"></i>
              </label>
            </div>
            <template v-for="(b, i) in compTools" :key="i">
              <i v-if="b.sep" class="sep"></i>
              <button v-else class="tool"><svg class="i16" viewBox="0 0 16 16" v-html="swatch(b.icon)"></svg><span>{{ b.label }}</span></button>
            </template>
          </div>
          <div class="panel next"><i class="grip"></i>
            <template v-for="(b, i) in axisTools" :key="i">
              <button class="tool" :class="{ on: b.on, deep: b.on, splitb: b.arrow === 'split' }"><svg class="i16" viewBox="0 0 16 16" v-html="swatch(b.icon)"></svg><span>{{ b.label }}</span><i v-if="b.arrow" class="arr" :class="b.arrow"></i></button>
            </template>
          </div>
        </div>
        <div class="trow third">
          <div class="panel draw"><i class="grip"></i>
            <template v-for="(b, i) in drawTools" :key="i">
              <i v-if="b.sep" class="sep"></i>
              <button v-else class="tool"><svg class="i16" viewBox="0 0 16 16" v-html="swatch(b.icon)"></svg><span>{{ b.label }}</span><i v-if="b.arrow" class="arr" :class="b.arrow"></i></button>
            </template>
            <div class="combos"><label class="combo small"><select aria-label="画弧半径"><option></option></select><i class="arr"></i></label></div>
            <template v-for="(b, i) in beamTools" :key="'b' + i">
              <i v-if="b.sep" class="sep"></i>
              <button v-else class="tool"><svg class="i16" viewBox="0 0 16 16" v-html="swatch(b.icon)"></svg><span>{{ b.label }}</span><i v-if="b.arrow" class="arr" :class="b.arrow"></i></button>
            </template>
            <span class="more">»</span>
          </div>
          <div class="panel stub2"><i class="grip"></i></div>
        </div>

        <svg class="scene" viewBox="180 168 1185 507" preserveAspectRatio="xMidYMid slice">
          <rect x="180" y="168" width="1185" height="507" fill="#000" />
          <g shape-rendering="crispEdges">
            <line v-for="(g, i) in dimGrid" :key="i" :x1="g[0]" :y1="g[1]" :x2="g[2]" :y2="g[3]" stroke="#850000" />
            <path d="M180 273.500L1366 229.500M180 598.500L1366 555" stroke="#f00" />
            <path d="M312 241l51-2 1.500 48-51.500 2z" fill="#00e8e8" />
            <path d="M363 239l12 190 7 129 2 56-4-40-16-287z" fill="#009696" />
            <path d="M313 289l51.500-2 8.500 138 11 190-50.500 2z" fill="#00b3b3" />
            <path d="M372 415l3 14 7 129 2 57z" fill="#009696" />
            <path d="M363 239l467-17 2 49-467.500 17z" fill="#00e800" />
            <path d="M365 287.500l467-17 4 71-168 6-295 68z" fill="#00b300" />
            <path d="M881 221l4 62 5 95 5.500 83 4.500 84 1 51-6-50-14-277z" fill="#009696" />
            <path d="M830 222.500l51-2 .5 49-50.500 2z" fill="#00e8e8" />
            <path d="M831 271l50.500-2 19.500 327-50 2z" fill="#00b3b3" />
            <line v-for="(d, i) in dashes" :key="'d' + i" :x1="d[0]" :y1="d[1]" :x2="d[0]" :y2="d[2]" stroke="#00a000" />
            <path d="M1179 168h12.500l4.500 67 1 55 1 105 2 166h-2.500l.5 24 6 90h-16l-9-440z" fill="#737373" />
            <path d="M1189 391l2 39 9 131h-3l-8-131z" fill="#888" />
            <path d="M1136.500 168H1179l1 68 6 144 3 295h-50l-4-294 2-145z" fill="#adadad" />
            <path d="M1184 234l2 41 2.500 95 .5 55-1.500 2-2-47z" fill="#005000" />
            <path d="M1133.500 236l50.500-2 2 146-51 2z" fill="#007000" />
          </g>
          <g fill="none" stroke="#fff" stroke-opacity=".55" shape-rendering="crispEdges">
            <circle :cx="bigCircle.x" :cy="bigCircle.y" :r="bigCircle.r" />
            <circle v-for="(h, i) in handles" :key="'h' + i" :cx="h[0]" :cy="h[1]" r="14" />
          </g>
          <g class="axis">
            <path d="M193 259.500l9 4 4 9-4 9-9 4-9-4-4-9 4-9zM193 584.500l9 4 4 9-4 9-9 4-9-4-4-9 4-9z" fill="none" stroke="#087808" />
            <text x="193" y="278" text-anchor="middle">C</text>
            <text x="193" y="603" text-anchor="middle">B</text>
            <path d="M180 273.500l26-1M180 598.500l26-1" stroke="#f00" />
          </g>
          <path d="M236.500 625V594l-4 4M236.500 594l3 4" fill="none" stroke="#0f0" />
          <path d="M232 626v-26h-3l5-9 4 9h-2v26z" fill="#0080ff" />
          <path d="M235 622.500l37-1.500v-2l12 4-12 4v-2l-37 1.500z" fill="#f00" />
          <g class="gizmo">
            <text x="219" y="595" fill="#0080ff">Z</text><text x="244" y="599" fill="#0f0">Y</text><text x="272" y="617" fill="#f00">X</text>
          </g>
        </svg>

        <div class="trow bottom">
          <div class="panel"><i class="grip"></i>
            <button v-for="(b, i) in modeTools" :key="i" class="tool" :class="{ on: b.on }"><svg class="i16" viewBox="0 0 16 16" v-html="swatch(b.icon)"></svg><span>{{ b.label }}</span></button>
          </div>
          <div class="panel next"><i class="grip"></i>
            <button v-for="(b, i) in snapTools" :key="i" class="tool" :class="{ on: b.on }"><svg class="i16" viewBox="0 0 16 16" v-html="swatch(b.icon)"></svg><span>{{ b.label }}</span></button>
          </div>
          <div class="panel next coords"><i class="grip"></i>
            <div class="combos"><label class="combo small"><select aria-label="偏移方式"><option>不偏移</option></select><i class="arr"></i></label></div>
            <i class="sep"></i>
            <label class="num">X=<span class="spin"><input type="text" value="0" disabled /><svg viewBox="0 0 8 16"><path d="M1 4h6L4 1zM1 12h6l-3 3z" fill="#555" /></svg></span>mm</label>
            <label class="num">Y=<span class="spin"><input type="text" value="0" disabled /><svg viewBox="0 0 8 16"><path d="M1 4h6L4 1zM1 12h6l-3 3z" fill="#555" /></svg></span>mm</label>
            <i class="sep"></i>
            <label class="chk"><input type="checkbox" />旋转</label>
            <label class="num" aria-label="旋转角度"><span class="spin wide2"><input type="text" value="0.000" disabled /><svg viewBox="0 0 8 16"><path d="M1 4h6L4 1zM1 12h6l-3 3z" fill="#555" /></svg></span>°</label>
          </div>
        </div>
      </main>
    </div>

    <footer class="status">
      <div v-for="(c, i) in status" :key="i" class="cell" :class="'c' + i">
        <template v-for="(p, j) in c" :key="j">{{ p[0] }}<span class="mono">{{ p[1] }}</span></template>
      </div>
      <div class="cell rest"></div>
      <div class="cell fps"><span class="mono">866.1 FPS</span></div>
    </footer>

    <div class="taskbar">
      <button class="start" aria-label="开始"><svg viewBox="0 0 16 16"><path d="M0 2.500L7 1.500v6H0zM8 1.300L16 0v7.500H8zM0 8.500h7v6L0 13.500zM8 8.500h8V16l-8-1.300z" fill="#fff" /></svg></button>
      <label class="search">
        <svg class="ring" viewBox="0 0 22 22"><circle cx="11" cy="11" r="9" fill="none" stroke="#fff" stroke-width="3" /></svg>
        <input type="text" placeholder="在这里输入你要搜索的内容" />
        <svg class="mic" viewBox="0 0 12 18"><rect x="3.500" y=".5" width="5" height="11" fill="none" stroke="#aaa" /><path d="M.5 9v5h11V9M6 14v3M3 17.500h6" fill="none" stroke="#aaa" /></svg>
      </label>
      <button class="app-i" aria-label="任务视图"><svg viewBox="0 0 24 24"><path d="M6.500 5.500h11v13h-11zM4 7.500H2.500v10H4M20 7.500h1.500v10H20" fill="none" stroke="#fff" /></svg></button>
      <button class="app-i" aria-label="风车"><svg viewBox="0 0 24 24"><rect x="1.500" y="1.500" width="10.500" height="10.500" rx="4" fill="#e8ecee" /><rect x="12" y="1.500" width="10.500" height="10.500" rx="4" fill="#e8ecee" /><rect x="1.500" y="12" width="10.500" height="10.500" rx="4" fill="#e8ecee" /><rect x="12" y="12" width="10.500" height="10.500" rx="4" fill="#e8ecee" /><path d="M12 12C8 10 8 5 12 1M12 12c2-4 7-4 11 0M12 12c4 2 4 7 0 11M12 12c-2 4-7 4-11 0" fill="none" stroke="#10181b" stroke-width="1.300" /></svg></button>
      <button class="app-i" aria-label="提醒"><svg viewBox="0 0 28 26"><g fill="none" stroke="#e0e4e6" stroke-width="1.500"><path d="M15 6C8 3 3 8 3 14s5 9 10 8 7-6 5-9-8-4-9 1 5 5 6 2" /><path d="M13 8c-4-1-8 2-7 7s6 6 9 3" /></g><path d="M22 1c-3 0-4 3-4 6l-2 3h12l-2-3c0-3-1-6-4-6zM20 11h4l-2 2z" fill="#e5a812" /></svg></button>
      <button class="app-i gap" aria-label="Edge"><svg viewBox="0 0 24 24"><path d="M2 11C3 4 8 1 13 1c6 0 9 5 9 9v3H9c0 4 3 6 6 6 2 0 4-.5 6-1.500V22c-2 1-5 1.500-7 1.500C8 23.500 4 20 4 15c0-3 2-6 5-7-3 0-5 1-7 3zm7-2h7c0-3-1-4-3-4s-4 1-4 4z" fill="#0c80dc" /></svg></button>
      <button class="app-i" aria-label="应用商店"><svg viewBox="0 0 24 24"><path d="M7 6c0-6 10-6 10 0" fill="none" stroke="#ddd" stroke-width="1.500" /><path d="M1 5h22l-1 18H2z" fill="#fff" /><path d="M7 9h5v5H7z" fill="#f25022" /><path d="M13 9h5v5h-5z" fill="#7fba00" /><path d="M7 15h5v5H7z" fill="#00a4ef" /><path d="M13 15h5v5h-5z" fill="#ffb900" /></svg></button>
      <button class="app-i" aria-label="文件资源管理器"><svg viewBox="0 0 24 24"><path d="M1 3h9l1 2h11v16H1z" fill="#f7d774" /><path d="M2 3h8v2H2z" fill="#d9a431" /><path d="M1 7h21v14H1z" fill="#fde796" /><path d="M5 13h14v8h-4v-4H9v4H5z" fill="#3aa7dd" /></svg></button>
      <button class="app-i" aria-label="IE"><svg viewBox="0 0 24 24"><path d="M4 13C4 7 8 4 13 4s9 4 9 10H10c0 3 2 5 4 5s3-1 4-2h4c-1 4-5 6-9 6-6 0-9-4-9-10zm6-2h7c0-3-2-4-3.500-4S10 8 10 11z" fill="#3da8ea" stroke="#1b6fb8" /><path d="M22 6c1-4-1-6-6-3C8 6 1 15 1 20c0 4 4 3 7 1" fill="none" stroke="#f2c12e" stroke-width="2" /></svg></button>
      <button class="app-i active" aria-label="钢筋算量"><svg viewBox="0 0 24 24"><rect width="24" height="24" rx="4" fill="#0d8bf2" /><path d="M12 17c0 3.500-5 3.500-5 .5M12 17V8c0-4 4-4 4-1.500M8 15.500H6c-3 0-3-4 0-4h12c3 0 3 4 0 4" fill="none" stroke="#fff" stroke-width="1.800" /></svg></button>
      <button class="app-i run" aria-label="G"><svg viewBox="0 0 24 24"><path d="M23 2c-2 0-3 0-4 1-3-2-7-3-11-1C4 4 3 7 4 9c-2 0-3-1-3-1-1 8 4 15 11 15 6 0 10-4 10-9 0-4-3-7-7-7-3 0-6 2-6 5s2 5 5 5c2 0 3-1 3-3h-3v-2h6c0 4-3 8-7 8-5 0-8-4-8-8 0-5 4-8 9-8 4 0 7 0 9-2z" fill="#1d9cf0" /></svg></button>
      <button class="app-i run" aria-label="笔记"><svg viewBox="0 0 24 24"><rect width="24" height="24" rx="2" fill="#f39a12" /><rect x="2" y="2" width="20" height="20" fill="#ffc04a" /><path d="M4 6l13-2 2 15-13 2z" fill="#fff" /><path d="M7 9l8-1M7 12l8-1M8 15l8-1" stroke="#a55" /><path d="M13 16l7-12 2 1-7 12z" fill="#704214" /></svg></button>
      <button class="app-i run" aria-label="浏览器"><svg viewBox="0 0 24 24"><circle cx="12" cy="12" r="10.500" fill="#3db53f" stroke="#dff3df" /><path d="M6 12c0-7 12-7 12 1H10c0 4 4 4 7 2v3c-5 3-11 0-11-6zm4-1.500h4.500c0-3-4-3-4.500 0z" fill="#fff" /><path d="M1 19C4 10 12 3 21 2" fill="none" stroke="#8de06a" stroke-width="1.500" /></svg></button>

      <div class="cpu"><span>56%</span><span>CPU使用</span></div>
      <div class="tray">
        <svg viewBox="0 0 16 16"><path d="M2 11l6-6 6 6" fill="none" stroke="#fff" stroke-width="1.300" /></svg>
        <svg viewBox="0 0 16 16"><path d="M5 5h9v7H4V9" fill="none" stroke="#fff" stroke-width="1.500" /><path d="M7 7h6v3H7zM15 7h1v3h-1zM0 3h5v3L3 8H2L0 6zM1 1v2M4 1v2" fill="#fff" stroke="#fff" stroke-width=".5" /></svg>
        <svg viewBox="0 0 16 16"><path d="M3 14C3 8 7 4 14 3M6 14c0-4 3-7 8-8M9 14c0-3 2-4 5-5" fill="none" stroke="#ccc" stroke-width="1.300" /><circle cx="13" cy="13" r="1.500" fill="#fff" /></svg>
        <svg viewBox="0 0 18 16"><path d="M1 6h3l4-4v12l-4-4H1z" fill="none" stroke="#fff" /><path d="M10 6c1 1 1 3 0 4M12 4c3 2 3 6 0 8M14 2c4 3 4 9 0 12" fill="none" stroke="#ddd" /></svg>
        <svg class="kb" viewBox="0 0 24 14"><rect x=".5" y=".5" width="23" height="13" fill="none" stroke="#fff" /><path d="M3 4h18M3 7h18" stroke="#fff" stroke-width="1.500" stroke-dasharray="1 1" /><path d="M3 10.500h2M7 10.500h10M19 10.500h2" stroke="#fff" /></svg>
        <b class="zh">中</b>
        <svg viewBox="0 0 28 28"><path d="M2 6L22 1c3 0 4 2 4 4l1 15c0 3-1 4-4 5L9 27c-3 0-4-1-5-4L1 10c0-2 0-3 1-4z" fill="#f0501a" /><path d="M20 8C14 5 7 7 8 11s12 2 12 6-8 5-13 2" fill="none" stroke="#fff" stroke-width="4" /></svg>
      </div>
      <div class="clock"><span>20:50</span><span>2017/11/13</span></div>
      <button class="action" aria-label="通知"><svg viewBox="0 0 16 16"><path d="M0 0h16v12h-7l-3 3v-3H0z" fill="#fff" /><path d="M2 3.500h12M2 6h12M2 8.500h8" stroke="#222" /></svg><span class="cnt">20</span></button>
      <i class="desk"></i>
    </div>
  </div>
</template>

<style>
html, body { margin: 0; background: #f0f0f0; }
body { overflow: hidden; }
</style>

<style scoped>
.app { height: 100vh; display: flex; flex-direction: column; background: #f0f0f0; color: #000; font: 12px/16px "Noto Sans", "Noto Sans CJK SC", sans-serif; overflow: hidden; }
button { font: inherit; color: inherit; border: 0; background: none; padding: 0; margin: 0; }
.i16 { width: 16px; height: 16px; flex: none; }
.i12 { width: 12px; height: 12px; flex: none; }
.title { position: relative; display: flex; align-items: center; height: 24px; flex: none; background: #fff; padding-left: 2px; gap: 6px; }
.title h1 { margin: 0; font-family: Inter, "Noto Sans CJK SC", sans-serif; font-size: 12px; font-weight: 400; flex: 1; white-space: nowrap; }
.winbtns { display: flex; align-self: flex-start; height: 20px; }
.winbtns button { width: 46px; display: flex; justify-content: center; align-items: center; }
.winbtns svg { width: 12px; height: 12px; }
.ball { position: absolute; left: 492px; top: -26px; width: 40px; height: 17px; padding-top: 23px; border-radius: 50%; border: 3px solid #9aa59c; background: #3fc463; color: #fff; font-weight: 700; line-height: 14px; text-align: center; box-shadow: 0 1px 4px #777; }
.row { position: relative; display: flex; height: 27px; flex: none; margin-bottom: 3px; }
.panel { display: flex; align-items: stretch; background: linear-gradient(#fbfbfb, #f1f1f1); border-radius: 2px; white-space: nowrap; }
.grow { flex: 1; }
.menus { display: flex; align-items: center; width: 937px; padding-left: 7px; box-sizing: border-box; gap: 11px; white-space: nowrap; }
.menus .tool { padding: 0; }
.menus .menutool { margin-left: auto; }
.menus .tool:last-child { padding-right: 6px; margin-left: -4px; }
.hint { width: 187px; margin-right: 5px; align-items: center; justify-content: center; }
.hint a { color: #2f6b00; text-decoration: none; }
.account { align-items: center; }
.account .tool { padding-left: 1px; margin-right: 7px; }
.bellicon { margin-left: 8px; }
.more { margin-left: auto; align-self: flex-start; padding: 0 4px 0 2px; font-size: 15px; line-height: 12px; font-weight: 600; }
.ime { position: absolute; left: 663px; top: 7px; display: flex; align-items: center; z-index: 2; }
.slogo { width: 28px; height: 28px; }
.imebar { display: flex; align-items: center; gap: 6px; height: 22px; padding: 0 4px; margin-left: -1px; background: #fbfdff; border: 1px solid #b9cfe6; border-left: 0; box-sizing: border-box; }
.imebar svg { width: 16px; height: 16px; }
.imebar b { width: 16px; font-size: 15px; color: #1e6fc4; text-align: center; }
.file { width: 152px; }
.file .bare { padding: 0 2px 0 4px; }
.file .bare + .bare { padding-right: 4px; }
.main { width: 548px; margin: 0 3px 0 1px; }
.tool { display: flex; align-items: center; gap: 4px; padding: 0 3px 0 4px; }
.tool.off { color: #8a8a8a; }
.tool.white { background: #fff; }
.tool.on { background: #dcebf8; box-shadow: inset 0 0 0 1px #0078d7; }
.tool.deep { background: #aed4f3; }
.sep { width: 1px; margin: 4px 1px 4px 4px; background: #bdbdbd; }
.grip { width: 3px; margin: 5px 0 5px 4px; background: repeating-linear-gradient(#b4b4b4 0 2px, transparent 2px 4px); }
.arr { width: 7px; height: 4px; flex: none; background: #000; clip-path: polygon(0 0, 100% 0, 50% 100%); }
.arr.wide { margin-left: 1px; }
.arr.tight { margin-left: -3px; }
.splitb { padding-right: 3px; border: 0; background: linear-gradient(90deg, transparent 51px, #0078d7 51px, #0078d7 52px, transparent 52px), #aed4f3 !important; }
.arr.split { margin-left: 1px; }
.body { display: flex; flex: 1; min-height: 0; }
.side { width: 180px; flex: none; box-sizing: border-box; padding: 0 4px 2px 1px; display: flex; flex-direction: column; }
.sidehead { height: 15px; margin-bottom: 2px; margin-right: -1px; background: #0050e0; color: #fff; display: flex; align-items: center; gap: 6px; padding: 0 4px 0 1px; font-size: 13px; line-height: 15px; }
.sidehead span { flex: 1; }
.tab { height: 22px; flex: none; background: #f0f0f0; border: 1px solid #a0a0a0; box-shadow: inset 1px 1px #fff; }
.tab + .tab { border-top: 0; }
.sidebox { flex: 1; min-height: 0; display: flex; flex-direction: column; border: 1px solid #a0a0a0; border-width: 1px 1px 0; }
.expand { height: 26px; flex: none; background: linear-gradient(#fcfcfc, #f1f1f1); padding: 1px 0 0 6px; display: flex; align-items: center; box-sizing: border-box; }
.expand svg { width: 40px; height: 16px; }
.treebox { flex: 1; min-height: 0; display: flex; background: #fff; border: 1px solid #828790; margin: 0 1px 1px; }
.tree { flex: 1; overflow: hidden; padding-top: 1px; }
.node, .leaf { display: flex; height: 16px; align-items: center; white-space: nowrap; }
.tw { width: 12px; height: 16px; margin-left: 5px; }
.stub { width: 6px; height: 1px; background: repeating-linear-gradient(90deg, #808080 0 1px, transparent 1px 2px); }
.node .nm { margin-left: 5px; }
.v1 { width: 19px; height: 16px; margin-left: 12px; background: repeating-linear-gradient(#808080 0 1px, transparent 1px 2px) 0 0 / 1px 16px no-repeat; }
.v2 { width: 11px; height: 16px; background: repeating-linear-gradient(90deg, #808080 0 1px, transparent 1px 2px) 0 8px / 11px 1px no-repeat, repeating-linear-gradient(#808080 0 1px, transparent 1px 2px) 0 0 / 1px 16px no-repeat; }
.v2.last { background-size: 11px 1px, 1px 8px; }
.lab { display: flex; align-items: center; gap: 4px; padding-right: 4px; height: 16px; }
.lab.sel { background: #d9d9d9; }
.mono { font-family: "DejaVu Sans Mono", monospace; font-size: 10px; }
.scroll { width: 16px; background: #f0f0f0; display: flex; flex-direction: column; }
.scroll svg { width: 16px; height: 17px; flex: none; }
.scroll i { display: block; }
.track1 { flex: 58; }
.thumb { flex: 220; background: #cdcdcd; }
.track2 { flex: 170; }
.work { flex: 1; min-width: 0; display: flex; flex-direction: column; }
.trow { display: flex; height: 27px; flex: none; }
.trow.third { margin: 2px 0 1px; }
.panel.next { margin-left: 3px; }
.combos { display: flex; gap: 3px; padding: 0 1px; }
.combo { display: flex; align-items: center; width: 69px; background: #fff; margin: 2px 0; }
.combo.small { width: 58px; }
.draw .combo.small { width: 55px; }
.combo select { appearance: none; border: 0; background: transparent; font: inherit; color: #000; padding: 0 0 0 3px; margin: 0; flex: 1; min-width: 0; width: 100%; outline: 0; }
.combo .arr { margin: 0 2px; }
.draw { flex: 1; }
.stub2 { width: 31px; margin-left: 3px; }
.scene { flex: 1; min-height: 0; width: 100%; border-right: 1px solid #f0f0f0; box-sizing: border-box; display: block; }
.axis text { font: 700 16px "Liberation Mono", monospace; fill: #c0c0c0; }
.gizmo text { font: 13px "Liberation Sans", sans-serif; }
.bottom { margin: 2px 0 4px; }
.coords { align-items: center; }
.coords .grip, .coords .sep, .coords .combos { align-self: stretch; }
.num { display: flex; align-items: center; color: #6d6d6d; gap: 3px; margin-right: 5px; }
.num + .sep { margin-left: 0; }
.spin { display: flex; align-items: center; width: 58px; height: 23px; box-sizing: border-box; border: 1px solid #7a7a7a; padding-right: 3px; }
.spin.wide2 { width: 68px; }
.spin input { flex: 1; min-width: 0; width: 0; border: 0; background: none; text-align: right; font: inherit; color: #6d6d6d; padding: 0 8px 0 0; }
.spin svg { width: 8px; height: 16px; }
.chk { display: flex; align-items: center; gap: 7px; margin: 0 4px 0 0; }
.chk input { appearance: none; width: 12px; height: 12px; border: 1px solid #999; margin: 0 0 0 1px; background: #f5f5f5; }
.status { display: flex; height: 20px; flex: none; gap: 2px; background: #fff; }
.cell { box-sizing: border-box; border: 1px solid #d4d4d4; background: linear-gradient(#fafafa, #f0f0f0); padding-left: 1px; line-height: 18px; white-space: nowrap; }
.c0 { width: 148px; } .c1 { width: 78px; } .c2 { width: 98px; } .c3 { width: 48px; }
.rest { flex: 1; }
.fps { width: 70px; }
.taskbar { display: flex; height: 40px; flex: none; background: linear-gradient(90deg, #020b0d, #031014 60%, #000); color: #fff; }
.start { width: 48px; background: #000; display: flex; align-items: center; justify-content: center; }
.start svg { width: 16px; height: 16px; }
.search { width: 344px; background: #333; display: flex; align-items: center; box-sizing: border-box; padding: 0 14px 0 8px; gap: 4px; }
.ring { width: 24px; height: 24px; }
.search input { flex: 1; min-width: 0; border: 0; background: none; outline: 0; font: inherit; font-size: 14px; padding: 0; color: #fff; }
.search input::placeholder { color: #999; opacity: 1; }
.mic { width: 12px; height: 18px; }
.app-i { width: 49px; display: flex; align-items: center; justify-content: center; }
.app-i svg { width: 24px; height: 24px; }
.app-i.gap { margin-left: 5px; }
.app-i.active { background: linear-gradient(#343e41 38px, #76b9ed 38px); }
.app-i.run { background: linear-gradient(#76b9ed, #76b9ed) center bottom / 40px 2px no-repeat; }
.cpu { margin-left: auto; display: flex; flex-direction: column; align-items: center; justify-content: center; line-height: 17px; }
.tray { display: flex; align-items: center; gap: 8px; margin: 0 12px 0 18px; }
.tray svg { width: 16px; height: 16px; }
.tray .kb { width: 24px; height: 14px; }
.zh { font-weight: 500; font-size: 14px; margin: 0 6px 0 0; }
.clock { display: flex; flex-direction: column; align-items: center; justify-content: center; line-height: 18px; }
.action { position: relative; width: 54px; display: flex; align-items: center; justify-content: center; }
.action svg { width: 16px; height: 16px; }
.cnt { position: absolute; left: 22px; top: 17px; width: 20px; height: 17px; line-height: 17px; border-radius: 9px; background: #333b3e; border: 1px solid #777; font-weight: 600; }
.desk { width: 4px; border-left: 1px solid #555; }
</style>
